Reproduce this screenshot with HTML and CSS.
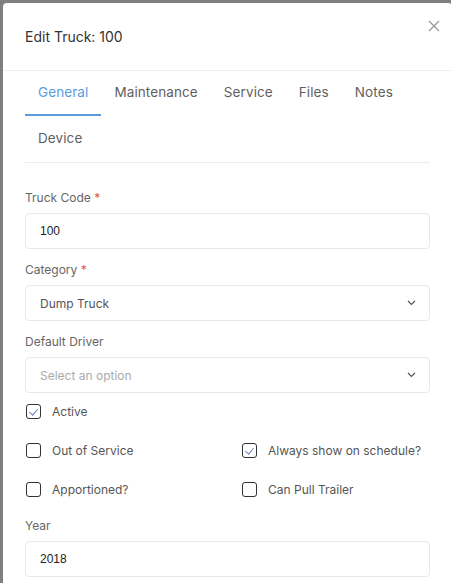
FILE: index.html
```html
<!DOCTYPE html>
<html lang="en">
<head>
    <meta charset="UTF-8">
    <meta name="viewport" content="width=device-width, initial-scale=1.0">
    <title>Edit Truck</title>
    <link rel="stylesheet" href="styles.css">
</head>
<body>
    <div class="modal">
        <div class="modal-header">
            <h3>Edit Truck: 100</h3>
            <span class="close">
                <svg width="12" height="12" viewBox="0 0 12 12"><path d="M1 1L11 11M11 1L1 11" stroke="#9a9a9a" stroke-width="1.4" fill="none"/></svg>
            </span>
        </div>
        <div class="modal-body">
            <ul class="tabs">
                <li class="active">General</li>
                <li>Maintenance</li>
                <li>Service</li>
                <li>Files</li>
                <li>Notes</li>
                <li>Device</li>
            </ul>
            <form action="">
                <div class="form-group">
                    <label>Truck Code <i>*</i></label>
                    <div class="control"><span class="value">100</span></div>
                </div>
                <div class="form-group">
                    <label>Category <i>*</i></label>
                    <div class="control select">
                        <span>Dump Truck</span>
                        <svg class="chevron" width="9" height="6" viewBox="0 0 9 6"><path d="M1 1L4.5 4.5L8 1" stroke="#555" stroke-width="1.2" fill="none"/></svg>
                    </div>
                </div>
                <div class="form-group">
                    <label>Default Driver</label>
                    <div class="control select">
                        <span class="placeholder">Select an option</span>
                        <svg class="chevron" width="9" height="6" viewBox="0 0 9 6"><path d="M1 1L4.5 4.5L8 1" stroke="#555" stroke-width="1.2" fill="none"/></svg>
                    </div>
                </div>
                <div class="checks">
                    <div class="check"><span class="box checked"></span>Active</div>
                    <div></div>
                    <div class="check"><span class="box"></span>Out of Service</div>
                    <div class="check"><span class="box checked"></span>Always show on schedule?</div>
                    <div class="check"><span class="box"></span>Apportioned?</div>
                    <div class="check"><span class="box"></span>Can Pull Trailer</div>
                </div>
                <div class="form-group">
                    <label>Year</label>
                    <div class="control"><span class="value">2018</span></div>
                </div>
            </form>
        </div>
    </div>
</body>
</html>
```

FILE: styles.css
```css
*{
    padding: 0;
    margin: 0;
    box-sizing: border-box;
}
html, body{
    height: 100%;
    overflow: hidden;
}
body{
    background-color: #7f7f7f;
    font-family: "Inter", "Open Sans", sans-serif;
    color: #555;
}
i{
    font-style: normal;
    color: #e5534b;
}
.modal{
    width: 449px;
    min-height: 600px;
    margin: 3px 0 0 3px;
    background-color: #fff;
    border-radius: 4px 4px 0 0;
}
.modal-header{
    position: relative;
    height: 68px;
    padding: 0 22px;
    display: flex;
    align-items: center;
    border-bottom: 1px solid #ebedf2;
}
.modal-header h3{
    font-size: 14px;
    font-weight: 400;
    color: #333;
}
.close{
    position: absolute;
    top: 17px;
    right: 12px;
    display: flex;
}
.modal-body{
    padding: 0 22px;
}
.tabs{
    list-style: none;
    display: flex;
    flex-wrap: wrap;
    margin-top: -1px;
    border-bottom: 1px solid #ebedf2;
}
.tabs li{
    padding: 0 13px;
    line-height: 44px;
    font-size: 13.5px;
    letter-spacing: 0.1px;
    color: #5f5f5f;
    border-bottom: 2px solid transparent;
}
.tabs li.active{
    color: #5d9bdd;
    border-bottom-color: #5d9bdd;
}
form{
    padding-top: 26px;
}
.form-group{
    margin-bottom: 12px;
}
.form-group label{
    display: block;
    font-size: 12px;
    line-height: 18px;
    color: #666;
    margin-bottom: 6px;
}
.control{
    height: 36px;
    border: 1px solid #e6e8ee;
    border-radius: 4px;
    padding: 0 14px;
    display: flex;
    align-items: center;
    justify-content: space-between;
    font-size: 12px;
    color: #555;
}
.control .value{
    font-family: "Liberation Sans", Arial, sans-serif;
    color: #222;
}
.control .placeholder{
    color: #aaa;
}
.chevron{
    margin-right: -1px;
}
.checks{
    display: grid;
    grid-template-columns: 216px 1fr;
    row-gap: 21px;
    margin: -3px 0 19px;
}
.check{
    display: flex;
    align-items: center;
    height: 18px;
    font-size: 12px;
    color: #555;
}
.box{
    width: 15px;
    height: 15px;
    margin: 0 11px 0 1px;
    border: 1px solid #333;
    border-radius: 3px;
    position: relative;
}
.box.checked::after{
    content: "";
    position: absolute;
    left: 4px;
    top: 2px;
    width: 4px;
    height: 7px;
    border: solid #6d7fc4;
    border-width: 0 1px 1px 0;
    transform: rotate(40deg);
}
```
